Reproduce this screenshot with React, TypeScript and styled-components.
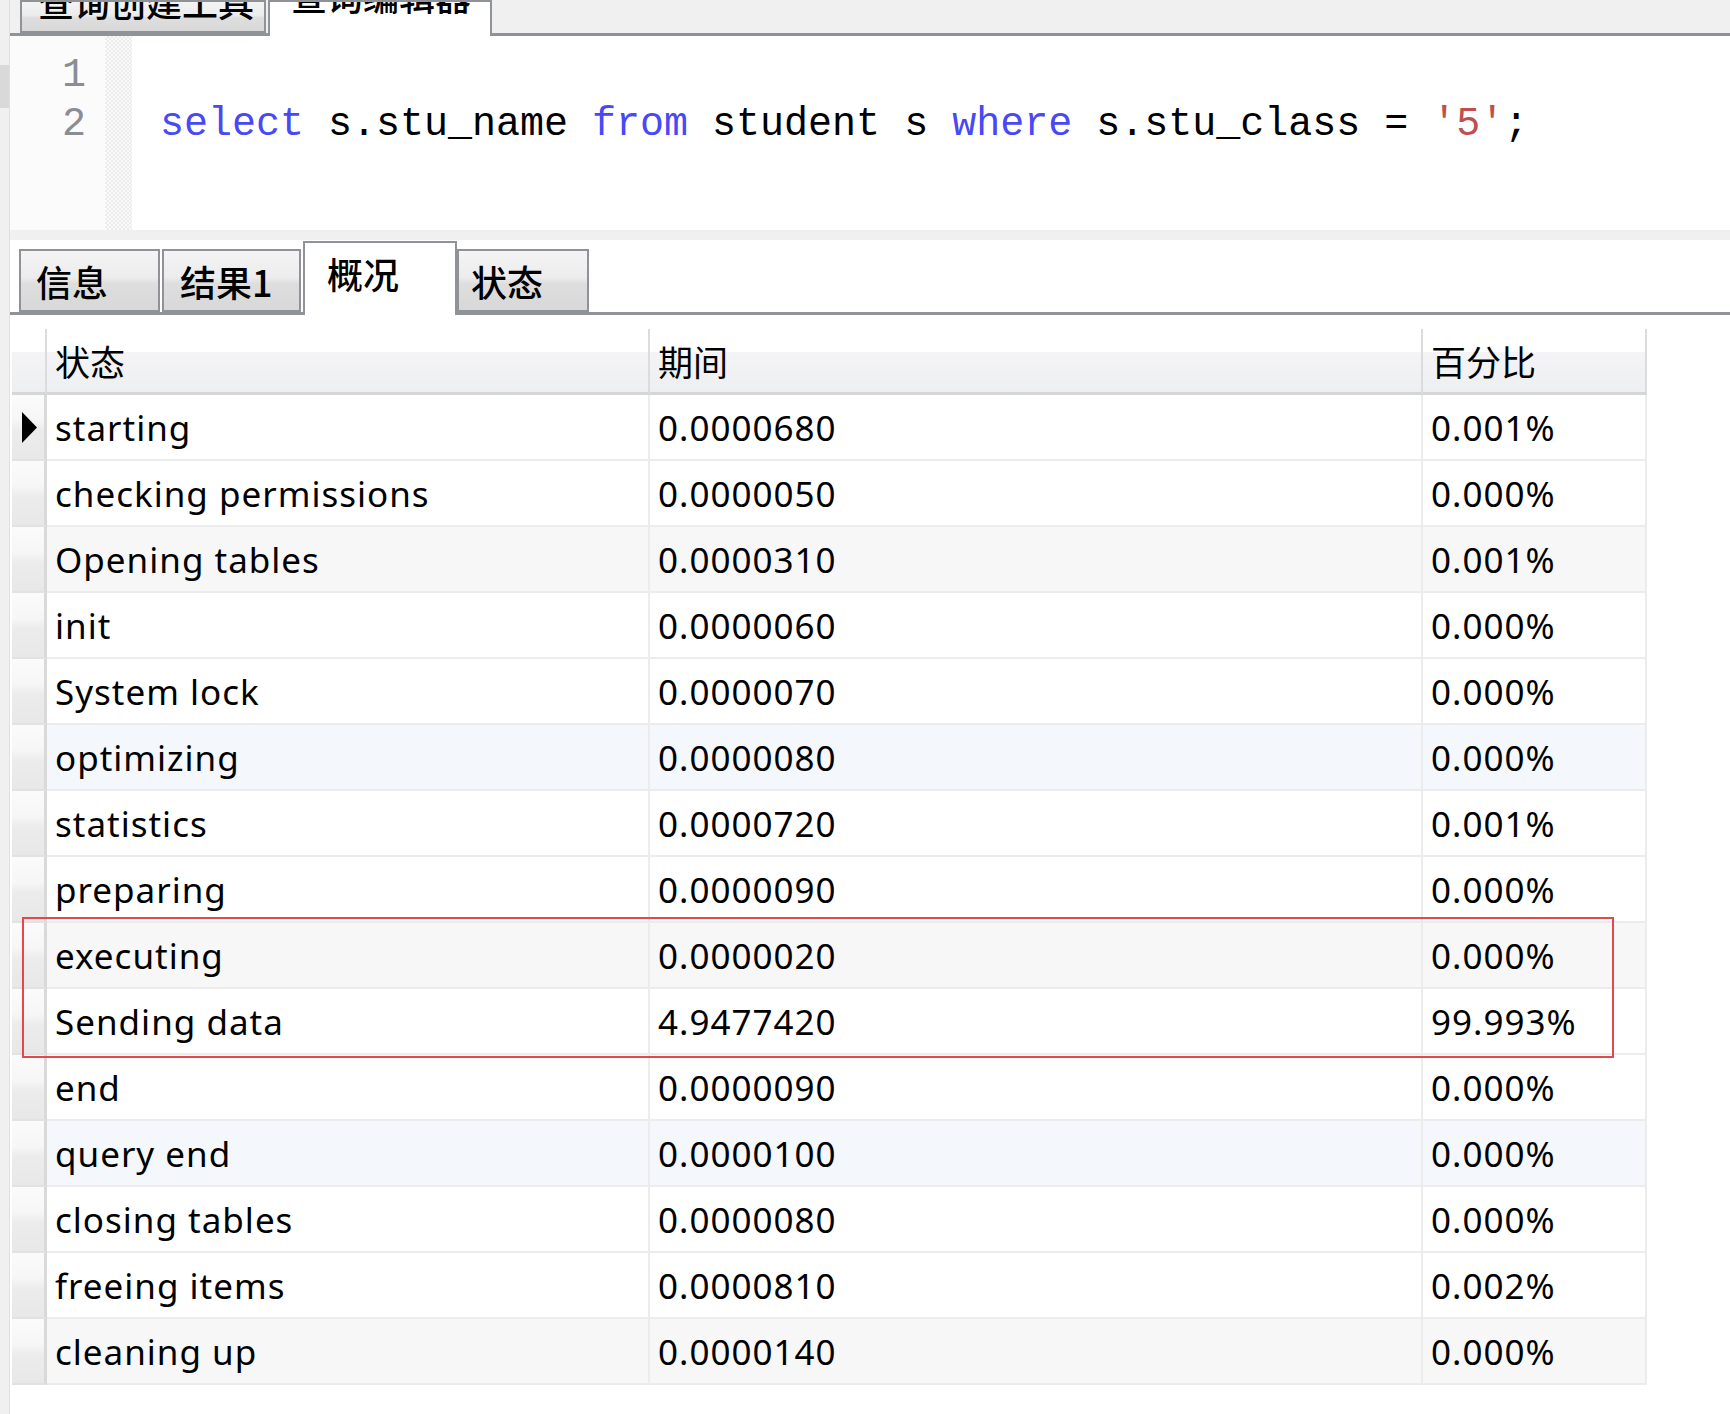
import React from 'react';
import styled, { createGlobalStyle } from 'styled-components';

const COLS = '35px 603px 773px 224px';

const GlobalStyle = createGlobalStyle`
  html, body {
    margin: 0;
    padding: 0;
    background: #fff;
  }
  body {
    font-family: "Noto Sans", "Noto Sans CJK SC", sans-serif;
    color: #000;
  }
  * {
    box-sizing: border-box;
  }
`;

const Shell = styled.div`
  display: flex;
  width: 1730px;
  height: 1414px;
  overflow: hidden;
  background: #fff;
`;

const LeftRail = styled.div`
  flex: 0 0 10px;
  background: #f0f0f0;
  border-right: 1px solid #e0e0e0;
  padding-top: 65px;
`;

const RailGrip = styled.div`
  height: 43px;
  background: #d9d9d9;
`;

const Main = styled.div`
  flex: 1;
  display: flex;
  flex-direction: column;
  min-width: 0;
`;

/* ---------- tab strips ---------- */

interface IStripProps {
  readonly height: number;
  readonly shade?: boolean;
  readonly inset: number;
}

const TabStrip = styled.div<IStripProps>`
  display: flex;
  align-items: flex-end;
  height: ${p => p.height}px;
  padding-left: ${p => p.inset}px;
  background: ${p => (p.shade ? '#f0f0f0' : '#fff')};
  border-bottom: 3px solid #8f9296;
  overflow: visible;
`;

interface ITabProps {
  readonly active?: boolean;
  readonly w: number;
  readonly h: number;
  readonly padLeft: number;
  readonly padBottom?: number;
}

const Tab = styled.div<ITabProps>`
  display: flex;
  align-items: ${p => (p.padBottom !== undefined ? 'flex-end' : 'center')};
  flex: 0 0 ${p => p.w}px;
  height: ${p => p.h}px;
  padding-left: ${p => p.padLeft}px;
  padding-bottom: ${p => p.padBottom || 0}px;
  margin-right: ${p => (p.active ? 0 : 2)}px;
  margin-bottom: ${p => (p.active ? -3 : 0)}px;
  border: 2px solid #8f9296;
  border-bottom: ${p => (p.active ? 'none' : '2px solid #8f9296')};
  background: ${p =>
    p.active
      ? '#fff'
      : 'linear-gradient(to bottom, #f4f4f4 0%, #ececec 45%, #dedede 55%, #d8d8d8 100%)'};
  font-family: "Noto Sans CJK SC", sans-serif;
  font-size: 36px;
  line-height: 36px;
  font-weight: 500;
  color: #000;
  white-space: nowrap;
  overflow: hidden;
  position: relative;
  z-index: ${p => (p.active ? 1 : 0)};
`;

/* ---------- editor ---------- */

const Editor = styled.div`
  display: flex;
  height: 194px;
  background: #fff;
`;

const Gutter = styled.div`
  flex: 0 0 95px;
  padding: 15px 19px 0 0;
  background: #fbfbfb;
  text-align: right;
  font-family: "Liberation Mono", monospace;
  font-size: 40px;
  line-height: 49px;
  color: #8a8d92;
`;

const FoldMargin = styled.div`
  flex: 0 0 27px;
  background-color: #fafafa;
  background-image: repeating-conic-gradient(#ececec 0 25%, #fafafa 0 50%);
  background-size: 4px 4px;
`;

const Code = styled.pre`
  margin: 0;
  padding: 15px 0 0 28px;
  font-family: "Liberation Mono", monospace;
  font-size: 40px;
  line-height: 49px;
  color: #000;
  white-space: pre;
`;

const Keyword = styled.span`
  color: #4848f6;
`;

const Str = styled.span`
  color: #c05050;
`;

const Splitter = styled.div`
  height: 10px;
  background: #f0f0f0;
`;

/* ---------- result grid ---------- */

const Grid = styled.div`
  position: relative;
  width: 1635px;
  margin: 14px 0 0 2px;
  font-family: "Noto Sans", "Noto Sans CJK SC", sans-serif;
  font-size: 35px;
  letter-spacing: 1px;
  color: #000;
`;

const Row = styled.div`
  display: grid;
  grid-template-columns: ${COLS};
  height: 66px;
`;

const HeadCell = styled.div`
  display: flex;
  align-items: center;
  padding-left: 8px;
  border-right: 2px solid #dcdcdc;
  border-bottom: 3px solid #d6d6d6;
  background: linear-gradient(to bottom, #fff 0%, #fff 36%, #f4f4f6 37%, #eeeff1 100%);
  font-family: "Noto Sans CJK SC", sans-serif;
  letter-spacing: 0;
`;

const Indicator = styled.div`
  display: flex;
  align-items: center;
  padding-left: 9px;
  border-right: 3px solid #d9d9d9;
  border-bottom: 2px solid #e2e2e2;
  background: linear-gradient(to bottom, #fbfbfb 0%, #f6f6f6 40%, #ececec 55%, #e8e8e8 100%);
`;

type Shade = 'none' | 'gray' | 'blue';

const shadeColor: Record<Shade, string> = {
  none: '#fff',
  gray: '#f7f7f7',
  blue: '#f4f7fb',
};

const Cell = styled.div<{ readonly shade: Shade }>`
  display: flex;
  align-items: center;
  padding-left: 8px;
  border-right: 2px solid #ececec;
  border-bottom: 2px solid #ececec;
  background: ${p => shadeColor[p.shade]};
  white-space: nowrap;
`;

const Highlight = styled.div`
  position: absolute;
  left: 10px;
  top: 588px;
  width: 1592px;
  height: 141px;
  border: 2px solid #e4484c;
  pointer-events: none;
`;

const rows: [string, string, string][] = [
  ['starting', '0.0000680', '0.001%'],
  ['checking permissions', '0.0000050', '0.000%'],
  ['Opening tables', '0.0000310', '0.001%'],
  ['init', '0.0000060', '0.000%'],
  ['System lock', '0.0000070', '0.000%'],
  ['optimizing', '0.0000080', '0.000%'],
  ['statistics', '0.0000720', '0.001%'],
  ['preparing', '0.0000090', '0.000%'],
  ['executing', '0.0000020', '0.000%'],
  ['Sending data', '4.9477420', '99.993%'],
  ['end', '0.0000090', '0.000%'],
  ['query end', '0.0000100', '0.000%'],
  ['closing tables', '0.0000080', '0.000%'],
  ['freeing items', '0.0000810', '0.002%'],
  ['cleaning up', '0.0000140', '0.000%'],
];

const shadeFor = (i: number): Shade => {
  if (i % 3 !== 2) return 'none';
  return Math.floor(i / 3) % 2 === 0 ? 'gray' : 'blue';
};

const RowPointer = () => (
  <svg width="17" height="31" viewBox="0 0 17 31">
    <polygon points="1,0 16,15.5 1,31" fill="#000" />
  </svg>
);

export default () => {
  return (
    <Shell>
      <GlobalStyle />
      <LeftRail>
        <RailGrip />
      </LeftRail>
      <Main>
        <TabStrip height={36} inset={10} shade>
          <Tab w={246} h={33} padLeft={16} padBottom={12}>查询创建工具</Tab>
          <Tab active w={224} h={36} padLeft={21} padBottom={23}>查询编辑器</Tab>
        </TabStrip>

        <Editor>
          <Gutter>
            1
            <br />
            2
          </Gutter>
          <FoldMargin />
          <Code>
            {'\n'}
            <Keyword>select</Keyword> s.stu_name <Keyword>from</Keyword> student s <Keyword>where</Keyword> s.stu_class = <Str>'5'</Str>;
          </Code>
        </Editor>

        <Splitter />

        <TabStrip height={75} inset={9}>
          <Tab w={141} h={63} padLeft={15}>信息</Tab>
          <Tab w={139} h={63} padLeft={16}>结果1</Tab>
          <Tab active w={154} h={74} padLeft={22} padBottom={24}>概况</Tab>
          <Tab w={132} h={63} padLeft={12}>状态</Tab>
        </TabStrip>

        <Grid>
          <Row>
            <HeadCell />
            <HeadCell>状态</HeadCell>
            <HeadCell>期间</HeadCell>
            <HeadCell>百分比</HeadCell>
          </Row>
          {rows.map(([state, duration, pct], i) => (
            <Row key={state}>
              <Indicator>{i === 0 && <RowPointer />}</Indicator>
              <Cell shade={shadeFor(i)}>{state}</Cell>
              <Cell shade={shadeFor(i)}>{duration}</Cell>
              <Cell shade={shadeFor(i)}>{pct}</Cell>
            </Row>
          ))}
          <Highlight />
        </Grid>
      </Main>
    </Shell>
  );
};
